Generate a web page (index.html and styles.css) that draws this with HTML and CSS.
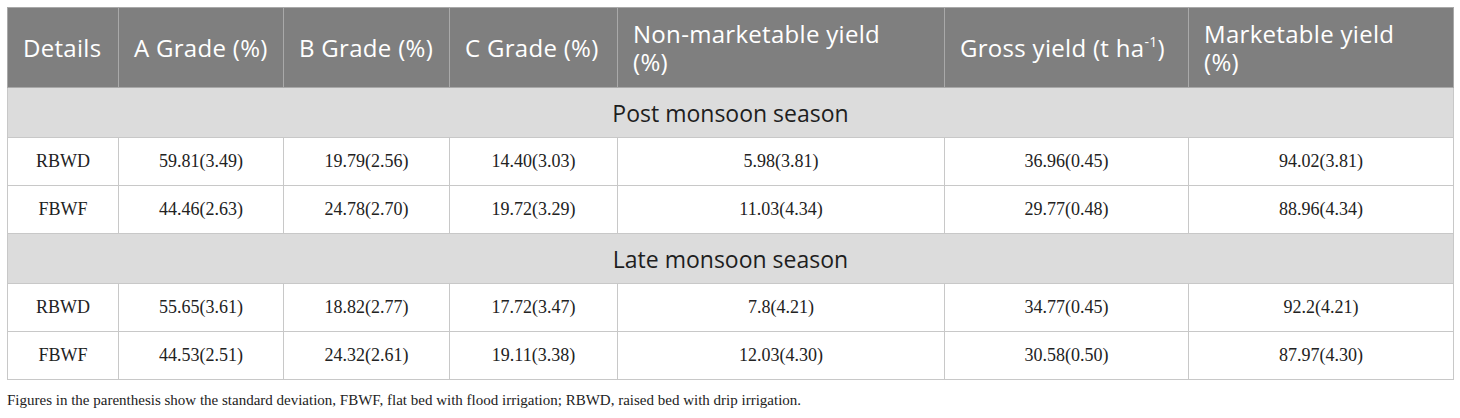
FILE: index.html
```html
<!DOCTYPE html>
<html>
<head>
<meta charset="utf-8">
<link rel="stylesheet" href="styles.css">
</head>
<body>
<div class="wrap">
<table class="data">
<colgroup>
<col class="c1"><col class="c2"><col class="c3"><col class="c4"><col class="c5"><col class="c6"><col class="c7">
</colgroup>
<thead>
<tr>
<th>Details</th>
<th>A Grade (%)</th>
<th>B Grade (%)</th>
<th>C Grade (%)</th>
<th>Non-marketable yield<br>(%)</th>
<th>Gross yield (t ha<sup>-1</sup>)</th>
<th>Marketable yield<br>(%)</th>
</tr>
</thead>
<tbody>
<tr class="section"><td colspan="7">Post monsoon season</td></tr>
<tr><td>RBWD</td><td>59.81(3.49)</td><td>19.79(2.56)</td><td>14.40(3.03)</td><td>5.98(3.81)</td><td>36.96(0.45)</td><td>94.02(3.81)</td></tr>
<tr><td>FBWF</td><td>44.46(2.63)</td><td>24.78(2.70)</td><td>19.72(3.29)</td><td>11.03(4.34)</td><td>29.77(0.48)</td><td>88.96(4.34)</td></tr>
<tr class="section"><td colspan="7">Late monsoon season</td></tr>
<tr><td>RBWD</td><td>55.65(3.61)</td><td>18.82(2.77)</td><td>17.72(3.47)</td><td>7.8(4.21)</td><td>34.77(0.45)</td><td>92.2(4.21)</td></tr>
<tr><td>FBWF</td><td>44.53(2.51)</td><td>24.32(2.61)</td><td>19.11(3.38)</td><td>12.03(4.30)</td><td>30.58(0.50)</td><td>87.97(4.30)</td></tr>
</tbody>
</table>
<p class="note">Figures in the parenthesis show the standard deviation, FBWF, flat bed with flood irrigation; RBWD, raised bed with drip irrigation.</p>
</div>
</body>
</html>
```
FILE: styles.css
```css
html, body {
  margin: 0;
  padding: 0;
  background: #ffffff;
}
.wrap {
  padding: 7px 7px 0 7px;
}
.data {
  border-collapse: collapse;
  table-layout: fixed;
  width: 1446px;
}
.c1 { width: 111px; }
.c2 { width: 165px; }
.c3 { width: 166px; }
.c4 { width: 168px; }
.c5 { width: 327px; }
.c6 { width: 244px; }
.c7 { width: 265px; }
.data th {
  background: #7f7f7f;
  color: #ffffff;
  font-family: "Open Sans", "Liberation Sans", sans-serif;
  font-weight: normal;
  font-size: 24px;
  letter-spacing: 0.3px;
  line-height: 28px;
  text-align: left;
  vertical-align: middle;
  padding: 0 8px 0 15px;
  height: 80px;
  white-space: nowrap;
  border: 1px solid #a9a9a9;
  box-sizing: border-box;
}
.data th sup {
  font-size: 14px;
  line-height: 0;
  vertical-align: 10px;
}
.data td {
  font-family: "Liberation Serif", "Times New Roman", serif;
  font-size: 18px;
  color: #222222;
  text-align: center;
  vertical-align: middle;
  border: 1px solid #c8c8c8;
  height: 47px;
  padding: 0;
}
.data tr.section td {
  background: #dcdcdc;
  font-family: "Open Sans", "Liberation Sans", sans-serif;
  font-size: 23px;
  color: #1e1e1e;
  height: 49px;
}
.note {
  margin: 12px 0 0 0;
  font-family: "Liberation Serif", "Times New Roman", serif;
  font-size: 15px;
  color: #222222;
}
```
